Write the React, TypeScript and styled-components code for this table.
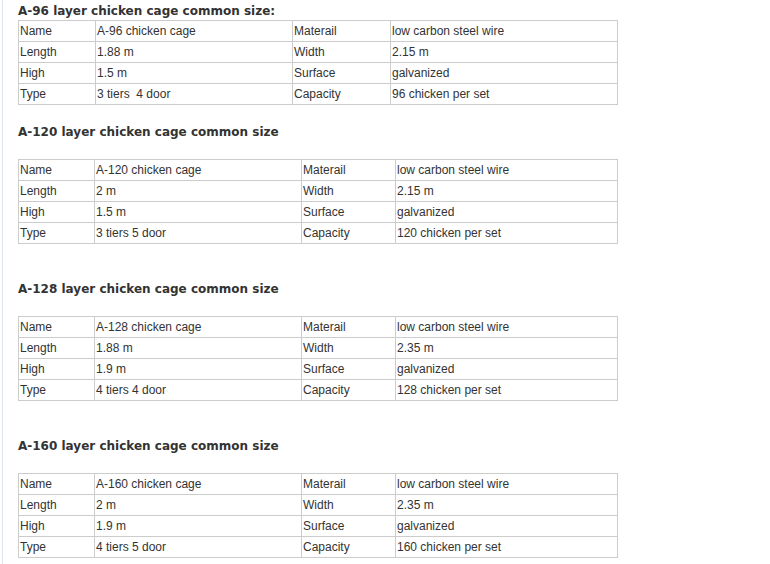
import React from "react";
import styled, { createGlobalStyle } from "styled-components";

const Global = createGlobalStyle`
  html, body { margin: 0; padding: 0; background: #ffffff; }
  body { font-family: "Liberation Sans", Arial, sans-serif; }
`;

const Page = styled.div`
  margin-left: 2px;
  border-left: 1px solid #dfe4ea;
  padding: 3px 0 0 15px;
  min-height: 564px;
  box-sizing: border-box;
`;

const Heading = styled.h3<{ $top: number; $bottom: number }>`
  margin: ${(p) => p.$top}px 0 ${(p) => p.$bottom}px 0;
  font-family: Verdana, "DejaVu Sans", sans-serif;
  font-size: 12px;
  line-height: 17px;
  font-weight: bold;
  color: #333333;
`;

const Table = styled.table`
  border-collapse: collapse;
  table-layout: fixed;
  width: 600px;
  font-family: "Liberation Sans", Arial, sans-serif;
  font-size: 12px;
  color: #333333;
`;

const Cell = styled.td`
  border: 1px solid #cccccc;
  height: 21px;
  padding: 0 1px;
  line-height: 14px;
  vertical-align: middle;
  white-space: pre;
  box-sizing: border-box;
`;

type Spec = {
  title: string;
  cols: number[];
  top: number;
  bottom: number;
  rows: [string, string, string, string][];
};

const specs: Spec[] = [
  {
    title: "A-96 layer chicken cage common size:",
    cols: [77, 197, 98],
    top: 0,
    bottom: 0,
    rows: [
      ["Name", "A-96 chicken cage", "Materail", "low carbon steel wire"],
      ["Length", "1.88 m", "Width", "2.15 m"],
      ["High", "1.5 m", "Surface", "galvanized"],
      ["Type", "3 tiers  4 door", "Capacity", "96 chicken per set"],
    ],
  },
  {
    title: "A-120 layer chicken cage common size",
    cols: [76, 207, 94],
    top: 19,
    bottom: 18,
    rows: [
      ["Name", "A-120 chicken cage", "Materail", "low carbon steel wire"],
      ["Length", "2 m", "Width", "2.15 m"],
      ["High", "1.5 m", "Surface", "galvanized"],
      ["Type", "3 tiers 5 door", "Capacity", "120 chicken per set"],
    ],
  },
  {
    title: "A-128 layer chicken cage common size",
    cols: [76, 207, 94],
    top: 37,
    bottom: 18,
    rows: [
      ["Name", "A-128 chicken cage", "Materail", "low carbon steel wire"],
      ["Length", "1.88 m", "Width", "2.35 m"],
      ["High", "1.9 m", "Surface", "galvanized"],
      ["Type", "4 tiers 4 door", "Capacity", "128 chicken per set"],
    ],
  },
  {
    title: "A-160 layer chicken cage common size",
    cols: [76, 207, 94],
    top: 37,
    bottom: 18,
    rows: [
      ["Name", "A-160 chicken cage", "Materail", "low carbon steel wire"],
      ["Length", "2 m", "Width", "2.35 m"],
      ["High", "1.9 m", "Surface", "galvanized"],
      ["Type", "4 tiers 5 door", "Capacity", "160 chicken per set"],
    ],
  },
];

export default function App() {
  return (
    <>
      <Global />
      <Page>
        {specs.map((s) => (
          <section key={s.title}>
            <Heading $top={s.top} $bottom={s.bottom}>
              {s.title}
            </Heading>
            <Table>
              <colgroup>
                {s.cols.map((w, i) => (
                  <col key={i} style={{ width: w }} />
                ))}
                <col />
              </colgroup>
              <tbody>
                {s.rows.map((r) => (
                  <tr key={r[0]}>
                    {r.map((c, i) => (
                      <Cell key={i}>{c}</Cell>
                    ))}
                  </tr>
                ))}
              </tbody>
            </Table>
          </section>
        ))}
      </Page>
    </>
  );
}
